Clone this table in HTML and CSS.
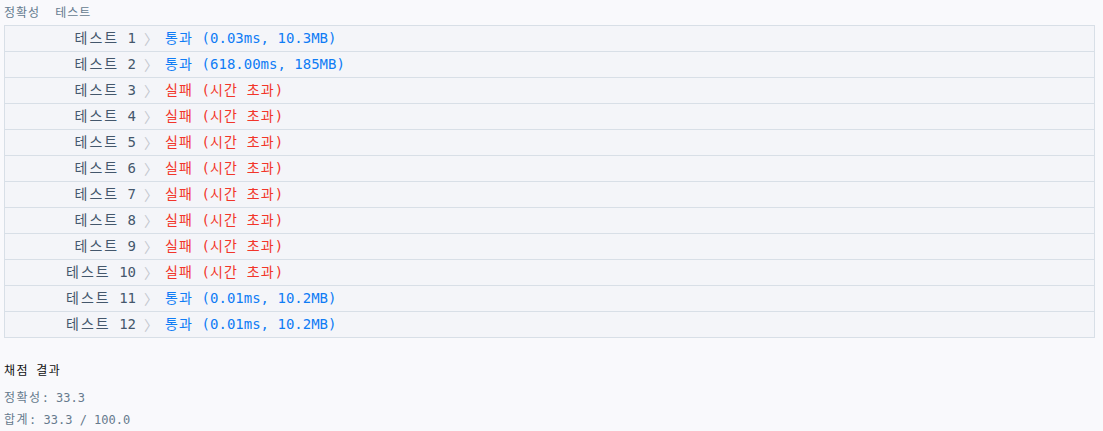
FILE: index.html
```html
<!DOCTYPE html>
<html lang="ko">
<head>
<meta charset="utf-8">
<link rel="stylesheet" href="styles.css">
</head>
<body>
<div class="tabs"><span class="tab ko">정확성</span><span class="tab ko">테스트</span></div>
<table class="results">
<tbody>
<tr><td class="label"><span class="ko">테스트</span> 1</td><td class="arrow">〉</td><td class="res pass"><span class="ko">통과</span> (0.03ms, 10.3MB)</td></tr>
<tr><td class="label"><span class="ko">테스트</span> 2</td><td class="arrow">〉</td><td class="res pass"><span class="ko">통과</span> (618.00ms, 185MB)</td></tr>
<tr><td class="label"><span class="ko">테스트</span> 3</td><td class="arrow">〉</td><td class="res fail"><span class="ko">실패</span> (<span class="ko">시간</span> <span class="ko">초과</span>)</td></tr>
<tr><td class="label"><span class="ko">테스트</span> 4</td><td class="arrow">〉</td><td class="res fail"><span class="ko">실패</span> (<span class="ko">시간</span> <span class="ko">초과</span>)</td></tr>
<tr><td class="label"><span class="ko">테스트</span> 5</td><td class="arrow">〉</td><td class="res fail"><span class="ko">실패</span> (<span class="ko">시간</span> <span class="ko">초과</span>)</td></tr>
<tr><td class="label"><span class="ko">테스트</span> 6</td><td class="arrow">〉</td><td class="res fail"><span class="ko">실패</span> (<span class="ko">시간</span> <span class="ko">초과</span>)</td></tr>
<tr><td class="label"><span class="ko">테스트</span> 7</td><td class="arrow">〉</td><td class="res fail"><span class="ko">실패</span> (<span class="ko">시간</span> <span class="ko">초과</span>)</td></tr>
<tr><td class="label"><span class="ko">테스트</span> 8</td><td class="arrow">〉</td><td class="res fail"><span class="ko">실패</span> (<span class="ko">시간</span> <span class="ko">초과</span>)</td></tr>
<tr><td class="label"><span class="ko">테스트</span> 9</td><td class="arrow">〉</td><td class="res fail"><span class="ko">실패</span> (<span class="ko">시간</span> <span class="ko">초과</span>)</td></tr>
<tr><td class="label"><span class="ko">테스트</span> 10</td><td class="arrow">〉</td><td class="res fail"><span class="ko">실패</span> (<span class="ko">시간</span> <span class="ko">초과</span>)</td></tr>
<tr><td class="label"><span class="ko">테스트</span> 11</td><td class="arrow">〉</td><td class="res pass"><span class="ko">통과</span> (0.01ms, 10.2MB)</td></tr>
<tr><td class="label"><span class="ko">테스트</span> 12</td><td class="arrow">〉</td><td class="res pass"><span class="ko">통과</span> (0.01ms, 10.2MB)</td></tr>
</tbody>
</table>
<div class="summary">
<div class="summary-title"><span class="ko">채점</span> <span class="ko">결과</span></div>
<div class="summary-line"><span class="ko">정확성</span>: 33.3</div>
<div class="summary-line"><span class="ko">합계</span>: 33.3 / 100.0</div>
</div>
</body>
</html>
```
FILE: styles.css
```css
html, body {
  margin: 0;
  background: #f9f9fc;
}
body {
  padding: 0 8px 0 4px;
  font-family: "DejaVu Sans Mono", "Noto Sans CJK KR", monospace;
}
.tabs {
  height: 25px;
  display: flex;
  align-items: center;
  font-size: 12px;
  color: #657b8f;
  font-family: "Noto Sans CJK KR", sans-serif;
  line-height: 1;
  padding-bottom: 2px;
  box-sizing: border-box;
}
.tabs .ko {
  letter-spacing: 1px;
}
.tab + .tab {
  margin-left: 15px;
}
.results {
  width: 100%;
  border-collapse: collapse;
  background: #f4f5f9;
  border: 1px solid #d8dfe7;
  font-size: 14px;
}
.results tr {
  height: 26px;
  border-bottom: 1px solid #d8dfe7;
}
.results td {
  padding: 0;
  line-height: 25px;
  white-space: pre;
  vertical-align: middle;
}
.label .ko {
  letter-spacing: 2px;
}
.res .ko {
  letter-spacing: 1.2px;
}
.label {
  width: 131px;
  text-align: right;
  color: #44576c;
}
.arrow {
  width: 21px;
  padding-left: 8px !important;
  color: #c3c7ce;
  font-family: "Noto Sans CJK KR", sans-serif;
}
.pass {
  color: #0f7cf5;
}
.fail {
  color: #f2352a;
}
.summary {
  margin-top: 22px;
  font-size: 12px;
}
.summary .ko {
  letter-spacing: 1.5px;
}
.summary-title {
  color: #111;
  line-height: 22px;
  margin-bottom: 5px;
}
.summary-line {
  color: #667a8d;
  line-height: 22px;
}
```
